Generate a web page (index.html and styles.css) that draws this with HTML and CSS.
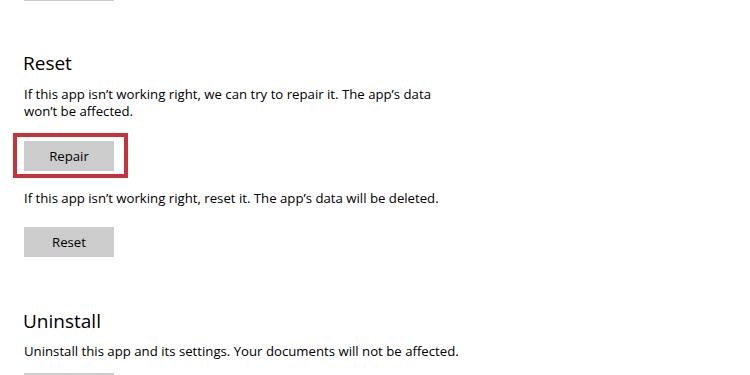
FILE: index.html
```html
<!DOCTYPE html>
<html lang="en">
<head>
<meta charset="utf-8">
<title>App settings</title>
<link rel="stylesheet" href="styles.css">
</head>
<body>
<main class="page">
  <div class="btn btn-prev"></div>

  <section class="group group-reset">
    <h2 class="heading">Reset</h2>
    <p class="desc">If this app isn’t working right, we can try to repair it. The app’s data<br>won’t be affected.</p>
    <div class="btn-row btn-row-repair">
      <button class="btn highlighted">Repair</button>
    </div>
    <p class="desc desc-reset">If this app isn’t working right, reset it. The app’s data will be deleted.</p>
    <div class="btn-row btn-row-reset">
      <button class="btn">Reset</button>
    </div>
  </section>

  <section class="group group-uninstall">
    <h2 class="heading">Uninstall</h2>
    <p class="desc desc-uninstall">Uninstall this app and its settings. Your documents will not be affected.</p>
    <div class="btn-row btn-row-uninstall">
      <button class="btn" aria-label="Uninstall"></button>
    </div>
  </section>
</main>
</body>
</html>
```

FILE: styles.css
```css
html, body {
  margin: 0;
  padding: 0;
  background: #ffffff;
  overflow: hidden;
}

body {
  font-family: "Open Sans", "Noto Sans", "Liberation Sans", sans-serif;
  color: #000000;
  width: 750px;
  height: 375px;
}

.page {
  display: flex;
  flex-direction: column;
  align-items: flex-start;
  padding-left: 24px;
}

.btn {
  display: block;
  width: 90px;
  height: 30px;
  margin: 0;
  padding: 0;
  border: none;
  background: #cccccc;
  font-family: inherit;
  font-size: 13.2px;
  color: #000000;
  text-align: center;
  line-height: 30px;
}

.btn-prev {
  margin-top: -29px;
}

.group {
  display: flex;
  flex-direction: column;
  align-items: flex-start;
}

.heading {
  margin: 0;
  font-size: 19px;
  font-weight: 400;
  line-height: 26px;
  margin-left: -1px;
}

.group-reset .heading {
  margin-top: 49px;
}

.group-uninstall .heading {
  margin-top: 51px;
}

.desc {
  margin: 10px 0 0 0;
  font-size: 13.2px;
  line-height: 17px;
}

.btn-row-repair {
  margin-top: 21px;
}

.desc-reset {
  margin-top: 19px;
}

.btn-row-reset {
  margin-top: 20px;
}

.desc-uninstall {
  margin-top: 9px;
}

.btn-row-uninstall {
  margin-top: 13px;
}

.highlighted {
  position: relative;
}

.highlighted::after {
  content: "";
  position: absolute;
  top: -8px;
  left: -11px;
  right: -14px;
  bottom: -7px;
  border: 4px solid #c8323a;
  pointer-events: none;
}
```
